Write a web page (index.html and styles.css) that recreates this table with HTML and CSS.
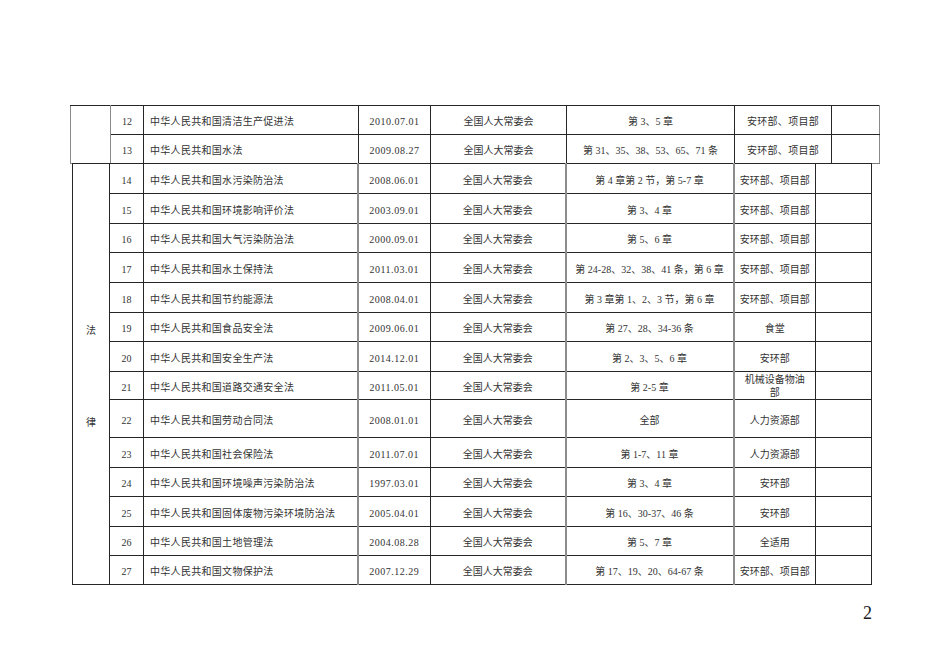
FILE: index.html
```html
<!DOCTYPE html>
<html lang="zh">
<head>
<meta charset="utf-8">
<title>法律法规清单</title>
<link rel="stylesheet" href="styles.css">
</head>
<body>
<div class="page">
  <table class="tbl tbl-top">
    <colgroup>
      <col class="c1a"><col class="c2a"><col class="c3a"><col class="c4a"><col class="c5a"><col class="c6a"><col class="c7a"><col class="c8a">
    </colgroup>
    <tr class="h29">
      <td class="cat cat-top" rowspan="2"></td>
      <td class="num">12</td><td class="name">中华人民共和国清洁生产促进法</td><td class="date">2010.07.01</td><td class="ctr">全国人大常委会</td><td class="ctr">第 3、5 章</td><td class="ctr spaced">安环部、项目部</td><td class="last"></td>
    </tr>
    <tr class="h29">
      <td class="num">13</td><td class="name">中华人民共和国水法</td><td class="date">2009.08.27</td><td class="ctr">全国人大常委会</td><td class="ctr">第 31、35、38、53、65、71 条</td><td class="ctr spaced">安环部、项目部</td><td class="last"></td>
    </tr>
  </table>

  <table class="tbl tbl-main">
    <colgroup>
      <col class="c1b"><col class="c2b"><col class="c3b"><col class="c4b"><col class="c5b"><col class="c6b"><col class="c7b"><col class="c8b">
    </colgroup>
    <tr class="h30">
      <td class="cat" rowspan="14"><div class="cat-text"><span>法</span><span>律</span></div></td>
      <td class="num">14</td><td class="name">中华人民共和国水污染防治法</td><td class="date g">2008.06.01</td><td class="ctr">全国人大常委会</td><td class="ctr g">第 4 章第 2 节，第 5-7 章</td><td class="ctr g">安环部、项目部</td><td class="last"></td>
    </tr>
    <tr class="h30">
      <td class="num">15</td><td class="name">中华人民共和国环境影响评价法</td><td class="date g">2003.09.01</td><td class="ctr">全国人大常委会</td><td class="ctr g">第 3、4 章</td><td class="ctr g">安环部、项目部</td><td class="last"></td>
    </tr>
    <tr class="h29">
      <td class="num">16</td><td class="name">中华人民共和国大气污染防治法</td><td class="date g">2000.09.01</td><td class="ctr">全国人大常委会</td><td class="ctr g">第 5、6 章</td><td class="ctr g">安环部、项目部</td><td class="last"></td>
    </tr>
    <tr class="h30">
      <td class="num">17</td><td class="name">中华人民共和国水土保持法</td><td class="date g">2011.03.01</td><td class="ctr">全国人大常委会</td><td class="ctr g">第 24-28、32、38、41 条，第 6 章</td><td class="ctr g">安环部、项目部</td><td class="last"></td>
    </tr>
    <tr class="h30">
      <td class="num">18</td><td class="name">中华人民共和国节约能源法</td><td class="date g">2008.04.01</td><td class="ctr">全国人大常委会</td><td class="ctr g">第 3 章第 1、2、3 节，第 6 章</td><td class="ctr g">安环部、项目部</td><td class="last"></td>
    </tr>
    <tr class="h29">
      <td class="num">19</td><td class="name">中华人民共和国食品安全法</td><td class="date g">2009.06.01</td><td class="ctr">全国人大常委会</td><td class="ctr g">第 27、28、34-36 条</td><td class="ctr g">食堂</td><td class="last"></td>
    </tr>
    <tr class="h30">
      <td class="num">20</td><td class="name">中华人民共和国安全生产法</td><td class="date g">2014.12.01</td><td class="ctr">全国人大常委会</td><td class="ctr g">第 2、3、5、6 章</td><td class="ctr g">安环部</td><td class="last"></td>
    </tr>
    <tr class="h28">
      <td class="num">21</td><td class="name">中华人民共和国道路交通安全法</td><td class="date g">2011.05.01</td><td class="ctr">全国人大常委会</td><td class="ctr g">第 2-5 章</td><td class="ctr g two">机械设备物油<br>部</td><td class="last"></td>
    </tr>
    <tr class="h38">
      <td class="num">22</td><td class="name">中华人民共和国劳动合同法</td><td class="date g">2008.01.01</td><td class="ctr">全国人大常委会</td><td class="ctr g">全部</td><td class="ctr g">人力资源部</td><td class="last"></td>
    </tr>
    <tr class="h30">
      <td class="num">23</td><td class="name">中华人民共和国社会保险法</td><td class="date g">2011.07.01</td><td class="ctr">全国人大常委会</td><td class="ctr g">第 1-7、11 章</td><td class="ctr g">人力资源部</td><td class="last"></td>
    </tr>
    <tr class="h29">
      <td class="num">24</td><td class="name">中华人民共和国环境噪声污染防治法</td><td class="date g">1997.03.01</td><td class="ctr">全国人大常委会</td><td class="ctr g">第 3、4 章</td><td class="ctr g">安环部</td><td class="last"></td>
    </tr>
    <tr class="h30">
      <td class="num">25</td><td class="name">中华人民共和国固体废物污染环境防治法</td><td class="date g">2005.04.01</td><td class="ctr">全国人大常委会</td><td class="ctr g">第 16、30-37、46 条</td><td class="ctr g">安环部</td><td class="last"></td>
    </tr>
    <tr class="h29">
      <td class="num">26</td><td class="name">中华人民共和国土地管理法</td><td class="date g">2004.08.28</td><td class="ctr">全国人大常委会</td><td class="ctr g">第 5、7 章</td><td class="ctr g">全适用</td><td class="last"></td>
    </tr>
    <tr class="h29">
      <td class="num">27</td><td class="name">中华人民共和国文物保护法</td><td class="date g">2007.12.29</td><td class="ctr">全国人大常委会</td><td class="ctr g">第 17、19、20、64-67 条</td><td class="ctr g">安环部、项目部</td><td class="last"></td>
    </tr>
  </table>

  <div class="footer">2</div>
</div>
</body>
</html>
```

FILE: styles.css
```css
html, body {
  margin: 0;
  padding: 0;
  background: #ffffff;
}

.page {
  width: 950px;
  height: 672px;
  padding-top: 105px;
  box-sizing: border-box;
  font-family: "Liberation Serif", "Noto Sans CJK SC", serif;
  color: #333333;
}

.tbl {
  border-collapse: collapse;
  table-layout: fixed;
  font-size: 10px;
}

.tbl td {
  border: 1px solid #262626;
  padding: 3px 0 0 0;
  vertical-align: middle;
  line-height: 13px;
  white-space: nowrap;
}

.tbl-top {
  width: 809px;
  margin-left: 70px;
}

.tbl-main {
  width: 799px;
  margin-left: 72px;
  margin-top: -1px;
}

.c1a { width: 40px; }
.c2a { width: 33px; }
.c3a { width: 215px; }
.c4a { width: 72px; }
.c5a { width: 136px; }
.c6a { width: 168px; }
.c7a { width: 97px; }
.c8a { width: 48px; }

.c1b { width: 37px; }
.c2b { width: 34px; }
.c3b { width: 214px; }
.c4b { width: 73px; }
.c5b { width: 135px; }
.c6b { width: 168px; }
.c7b { width: 82px; }
.c8b { width: 56px; }

.h28 { height: 28px; }
.h29 { height: 29px; }
.h30 { height: 30px; }
.h38 { height: 38px; }

.num {
  text-align: center;
}

.tbl td.name {
  text-align: left;
  padding-left: 6px;
  letter-spacing: 0.3px;
}

.date {
  text-align: center;
  letter-spacing: 0.5px;
}

.ctr {
  text-align: center;
}

.spaced {
  letter-spacing: 0.3px;
}

.tbl td.two {
  white-space: normal;
  line-height: 13px;
  padding-top: 0;
}

.tbl-top .cat-top {
  border-left-color: #8a8a8a;
  border-right-color: #8a8a8a;
  border-bottom-color: #8a8a8a;
}

.tbl-top .last {
  border-right-color: #8a8a8a;
}

.tbl-top tr:last-child td {
  border-bottom-color: #7a7a7a;
}

.tbl-main td.g {
  border-left: 2px solid #8c8c8c;
}

.tbl td.cat {
  padding-top: 0;
}

.cat-text {
  display: flex;
  flex-direction: column;
  align-items: center;
  gap: 80px;
  padding-top: 6px;
}
.cat-text span {
  display: block;
  line-height: 12px;
}

.footer {
  margin-top: 18px;
  padding-right: 78px;
  text-align: right;
  font-size: 18px;
  line-height: 20px;
  color: #1a1a1a;
}
```
